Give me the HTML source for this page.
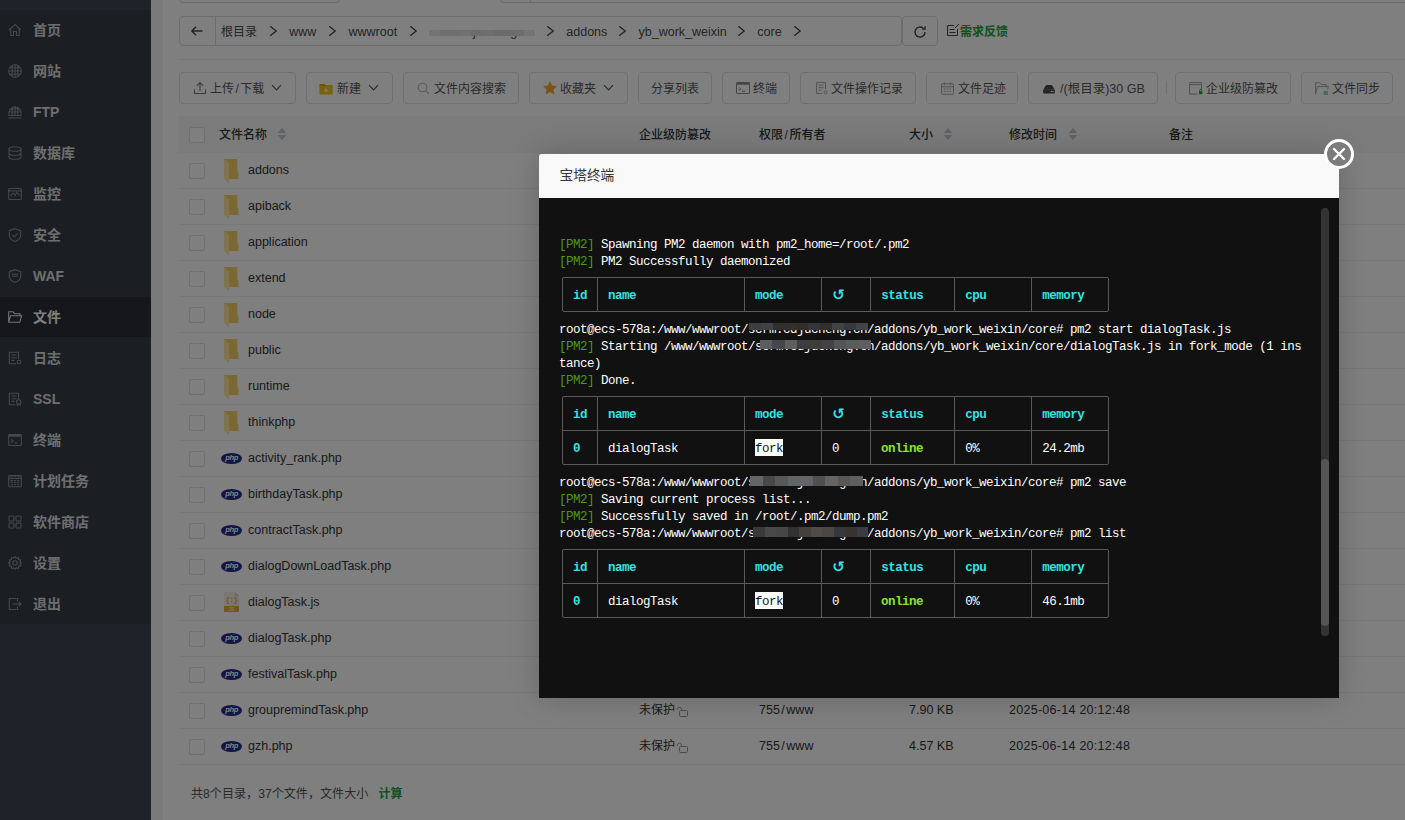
<!DOCTYPE html><html lang="zh-CN"><head><meta charset="utf-8"><title>宝塔Linux面板</title><style>
*{box-sizing:border-box;margin:0;padding:0}
html,body{width:1405px;height:820px;overflow:hidden;background:#f4f4f4;font-family:"Liberation Sans","Noto Sans CJK SC",sans-serif;font-size:12px;color:#333}
.abs{position:absolute}
#side{position:absolute;left:0;top:0;width:151px;height:820px;background:#3e4450}
#menu{position:absolute;left:0;top:10px;width:151px;height:614px;background:#363c46}
.mi{position:absolute;left:0;width:151px;height:40px;color:#dcdcdc;font-weight:bold;font-size:14px;line-height:40px}
.mi span{position:absolute;left:33px;top:0;white-space:nowrap}
.mi svg{position:absolute;left:7px;top:12px;width:16px;height:16px;stroke:#8c8f96;fill:none;stroke-width:1.1}
.mi.on{background:#2b2f37;color:#fff}
.mi.on svg{stroke:#e6e6e6}
#card{position:absolute;left:163px;top:-20px;width:1260px;height:860px;background:#fff}
.bx{position:absolute;border:1px solid #dcdfe6;border-radius:4px;background:#fff}
.btn{position:absolute;top:72px;height:32px;border:1px solid #dcdfe6;border-radius:4px;background:#fff;color:#555;font-size:12px;line-height:30px;white-space:nowrap}
.btn span{position:absolute;top:1px}
.btn svg{position:absolute}
.crumb{position:absolute;top:17px;height:30px;line-height:30px;font-size:12.5px;color:#4a4a4a;white-space:nowrap}
.hd{position:absolute;top:117px;height:36px;line-height:36px;font-size:12px;color:#333;font-weight:500;white-space:nowrap}
.row{position:absolute;left:179px;width:1226px;height:36px;border-bottom:1px solid #f0f1f4}
.cb{position:absolute;left:10px;top:10px;width:16px;height:16px;border:1px solid #dcdfe6;border-radius:2px;background:#fff}
.fn{position:absolute;left:69px;top:0;line-height:35px;font-size:12.5px;color:#333;white-space:nowrap}
.cell{position:absolute;top:0;line-height:35px;font-size:12.5px;color:#333;white-space:nowrap}
.ico{position:absolute}
#shade{position:absolute;left:0;top:0;width:1405px;height:820px;background:rgba(0,0,0,.5)}
#modal{position:absolute;left:539px;top:154px;width:800px;height:544px;background:#111;border-radius:2px;box-shadow:0 0 30px rgba(0,0,0,.2)}
#mtitle{position:absolute;left:0;top:0;width:800px;height:44px;background:#f9f9f9;border-radius:2px 2px 0 0;font-size:13.7px;color:#333;line-height:43px;padding-left:20.5px}
#close{position:absolute;left:785px;top:-15px;width:30px;height:30px;border-radius:50%;background:#7c7c7c;border:3px solid #fff}
#term{position:absolute;left:0;top:44px;width:800px;height:500px;background:#111;overflow:hidden}
.tl{position:absolute;left:20px;height:17px;line-height:17px;font-family:"Liberation Mono","DejaVu Sans Mono",monospace;font-size:12.5px;letter-spacing:-0.5px;color:#fff;white-space:pre}
.g{color:#4e9a06}
.c{color:#34e2e2;font-weight:bold}
.lg{color:#8ae234;font-weight:bold}
.inv{background:#fff;color:#111;padding-top:3.4px}
.rl{display:inline-block;width:7px;height:17px;vertical-align:top;font-family:"DejaVu Sans","DejaVu Sans Mono",sans-serif;font-size:15px;line-height:14px;letter-spacing:0}
.hl{position:absolute;height:1px;background:#5a5a5a}
.vl{position:absolute;width:1px;background:#5a5a5a}
</style></head><body>
<div id="side"><div id="menu">
<div class="mi" style="top:0px"><svg viewBox="0 0 16 16"><path d="M2 8 L8 2.5 L14 8 M3.8 6.8 V13.5 H6.5 V9.5 H9.5 V13.5 H12.2 V6.8"/></svg><span>首页</span></div>
<div class="mi" style="top:41px"><svg viewBox="0 0 16 16"><circle cx="8" cy="8" r="6.3"/><path d="M1.7 8H14.3M8 1.7V14.3M2.6 4.8H13.4M2.6 11.2H13.4M5.2 2.4V13.6M10.8 2.4V13.6"/></svg><span>网站</span></div>
<div class="mi" style="top:82px"><svg viewBox="0 0 16 16"><path d="M2 11.5A6.3 6.3 0 1 1 14 11.5Z M1.5 14H14.5 M1.8 8H14.2M8 1.7V11.5M5.2 2.5V11.5M10.8 2.5V11.5M2.6 5H13.4"/></svg><span>FTP</span></div>
<div class="mi" style="top:123px"><svg viewBox="0 0 16 16"><ellipse cx="8" cy="4" rx="6" ry="2.3"/><path d="M2 4V12C2 13.3 4.7 14.3 8 14.3S14 13.3 14 12V4M2 8C2 9.3 4.7 10.3 8 10.3S14 9.3 14 8"/></svg><span>数据库</span></div>
<div class="mi" style="top:164px"><svg viewBox="0 0 16 16"><rect x="1.7" y="2.5" width="12.6" height="11" rx="1"/><path d="M3.5 10 L6 7 L8 9.5 L10 6.5 L12.5 9.5 M1.7 5H14.3"/></svg><span>监控</span></div>
<div class="mi" style="top:205px"><svg viewBox="0 0 16 16"><path d="M8 1.7 L13.7 3.7 V8 C13.7 11.2 11.3 13.4 8 14.6 C4.7 13.4 2.3 11.2 2.3 8 V3.7 Z M5.5 8 L7.4 9.8 L10.7 6.4"/></svg><span>安全</span></div>
<div class="mi" style="top:246px"><svg viewBox="0 0 16 16"><path d="M8 1.7 L13.7 3.7 V8 C13.7 11.2 11.3 13.4 8 14.6 C4.7 13.4 2.3 11.2 2.3 8 V3.7 Z M5 6.3H11 M5.3 8.3H10.7"/></svg><span>WAF</span></div>
<div class="mi on" style="top:287px"><svg viewBox="0 0 16 16"><path d="M1.7 13.3 V2.7 H6 L7.6 4.7 H13 V6.7 M1.7 13.3 L3.6 6.7 H14.6 L12.8 13.3 Z"/></svg><span>文件</span></div>
<div class="mi" style="top:328px"><svg viewBox="0 0 16 16"><path d="M11.5 9V2.3H2.3V13.7H9 M4.3 5H9.7 M4.3 7.7H9.7 M4.3 10.4H7.5"/><circle cx="12" cy="12" r="1.8"/></svg><span>日志</span></div>
<div class="mi" style="top:369px"><svg viewBox="0 0 16 16"><path d="M11.5 8V2.3H2.3V13.7H8.5 M4.3 5H9.7 M4.3 7.7H9.7 M4.3 10.4H7.5"/><circle cx="11.7" cy="11" r="2.2"/><path d="M10.5 13 L10 15 M12.9 13 L13.4 15"/></svg><span>SSL</span></div>
<div class="mi" style="top:410px"><svg viewBox="0 0 16 16"><rect x="1.7" y="2.5" width="12.6" height="11" rx=".6"/><path d="M1.7 3.8H14.3" stroke-width="2"/><path d="M4 7.3 L6.2 9 L4 10.8 M7.5 11H10.5"/></svg><span>终端</span></div>
<div class="mi" style="top:451px"><svg viewBox="0 0 16 16"><rect x="1.7" y="2.6" width="12.6" height="11.2" rx=".8"/><path d="M1.7 5.4H14.3 M3.7 7.6H6 M6.9 7.6H9.1 M10 7.6H12.3 M3.7 9.7H6 M6.9 9.7H9.1 M10 9.7H12.3 M3.7 11.8H6 M6.9 11.8H9.1 M10 11.8H12.3 M4.5 2.6V4 M8 2.6V4 M11.5 2.6V4"/></svg><span>计划任务</span></div>
<div class="mi" style="top:492px"><svg viewBox="0 0 16 16"><rect x="2" y="2" width="5" height="5" rx="1"/><rect x="9" y="2" width="5" height="5" rx="1"/><rect x="2" y="9" width="5" height="5" rx="1"/><rect x="9" y="9" width="5" height="5" rx="1"/></svg><span>软件商店</span></div>
<div class="mi" style="top:533px"><svg viewBox="0 0 16 16"><circle cx="8" cy="8" r="2.2"/><path d="M8 1.6 L9.2 3.2 L11.2 2.5 L11.6 4.5 L13.6 4.9 L12.9 6.8 L14.4 8 L12.9 9.2 L13.6 11.1 L11.6 11.5 L11.2 13.5 L9.2 12.8 L8 14.4 L6.8 12.8 L4.8 13.5 L4.4 11.5 L2.4 11.1 L3.1 9.2 L1.6 8 L3.1 6.8 L2.4 4.9 L4.4 4.5 L4.8 2.5 L6.8 3.2 Z"/></svg><span>设置</span></div>
<div class="mi" style="top:574px"><svg viewBox="0 0 16 16"><path d="M10.5 5.5V2.5H2.3V13.5H10.5V10.5 M5.5 8H14 M11.8 5.8 L14 8 L11.8 10.2"/></svg><span>退出</span></div>
</div></div>
<div id="card"></div>
<div class="bx" style="left:179px;top:-30px;width:161px;height:33px;border-color:#cfd2d8"></div>
<div class="bx" style="left:500px;top:-30px;width:940px;height:33px;border-color:#cfd2d8"></div>
<div class="abs" style="left:530px;top:-1px;width:1px;height:4px;background:#cfd2d8"></div>
<div class="bx" style="left:179px;top:16px;width:723px;height:30px;border-color:#d8d9dc"></div>
<div class="bx" style="left:902px;top:16px;width:36px;height:30px;border-color:#d8d9dc"></div>
<div class="abs" style="left:215px;top:16px;width:1px;height:30px;background:#d8d9dc"></div>
<svg class="abs" style="left:190px;top:24px" width="14" height="14" viewBox="0 0 14 14" fill="none" stroke="#444" stroke-width="1.4"><path d="M12.5 7H2 M6 2.8 L1.8 7 L6 11.2"/></svg>
<svg class="abs" style="left:912px;top:23.6px" width="16" height="16" viewBox="0 0 16 16" fill="none" stroke="#444" stroke-width="1.4"><path d="M13 8 A5 5 0 1 1 11.2 4.2"/><path d="M13 2.2 V5 H10.2"/></svg>
<div class="crumb" style="left:221.0px;font-size:12px">根目录</div>
<div class="crumb" style="left:289.3px;font-size:12.5px">www</div>
<div class="crumb" style="left:348.5px;font-size:12.5px">wwwroot</div>
<div class="crumb" style="left:566.3px;font-size:12.5px">addons</div>
<div class="crumb" style="left:638.5px;font-size:12.5px">yb_work_weixin</div>
<div class="crumb" style="left:757.3px;font-size:12.5px">core</div>
<div class="crumb" style="left:429px;font-size:12.6px;clip-path:inset(13.5px 0 4px 0)">scrm.cdjucheng.cn</div>
<div class="abs" style="left:429px;top:30px;width:106px;height:5.6px;background:linear-gradient(90deg,#e9e9e9 0.0px,#e9e9e9 10.6px,#dedede 10.6px,#dedede 21.2px,#dedede 21.2px,#dedede 31.8px,#e2e2e2 31.8px,#e2e2e2 42.4px,#d8d8d8 42.4px,#d8d8d8 53.0px,#dcdcdc 53.0px,#dcdcdc 63.6px,#d6d6d6 63.6px,#d6d6d6 74.2px,#d6d6d6 74.2px,#d6d6d6 84.8px,#dadada 84.8px,#dadada 95.4px,#e8e8e8 95.4px,#e8e8e8 106.0px)"></div>
<svg class="abs" style="left:268.5px;top:25.4px" width="10" height="12" viewBox="0 0 10 12" fill="none" stroke="#4a4a4a" stroke-width="1.4"><path d="M1.2 1.2 L7.2 6 L1.2 10.8"/></svg>
<svg class="abs" style="left:327.8px;top:25.4px" width="10" height="12" viewBox="0 0 10 12" fill="none" stroke="#4a4a4a" stroke-width="1.4"><path d="M1.2 1.2 L7.2 6 L1.2 10.8"/></svg>
<svg class="abs" style="left:409.4px;top:25.4px" width="10" height="12" viewBox="0 0 10 12" fill="none" stroke="#4a4a4a" stroke-width="1.4"><path d="M1.2 1.2 L7.2 6 L1.2 10.8"/></svg>
<svg class="abs" style="left:545.8px;top:25.4px" width="10" height="12" viewBox="0 0 10 12" fill="none" stroke="#4a4a4a" stroke-width="1.4"><path d="M1.2 1.2 L7.2 6 L1.2 10.8"/></svg>
<svg class="abs" style="left:618.0px;top:25.4px" width="10" height="12" viewBox="0 0 10 12" fill="none" stroke="#4a4a4a" stroke-width="1.4"><path d="M1.2 1.2 L7.2 6 L1.2 10.8"/></svg>
<svg class="abs" style="left:736.5px;top:25.4px" width="10" height="12" viewBox="0 0 10 12" fill="none" stroke="#4a4a4a" stroke-width="1.4"><path d="M1.2 1.2 L7.2 6 L1.2 10.8"/></svg>
<svg class="abs" style="left:793.1px;top:25.4px" width="10" height="12" viewBox="0 0 10 12" fill="none" stroke="#4a4a4a" stroke-width="1.4"><path d="M1.2 1.2 L7.2 6 L1.2 10.8"/></svg>
<svg class="abs" style="left:946px;top:23px" width="14" height="14" viewBox="0 0 14 14" fill="none" stroke="#444" stroke-width="1"><path d="M11.5 6V12.5H1.5V2.5H8 M3.5 6.5H8.5 M3.5 9.5H9.5 M9 5 L13 1"/></svg>
<div class="crumb" style="left:960px;color:#20a53a;font-weight:bold;font-size:12px">需求反馈</div>
<div class="abs" style="left:179px;top:59px;width:1226px;height:1px;background:#ebeef5"></div>
<div class="btn" style="left:179px;width:117px"><svg style="left:13px;top:8px" width="14" height="14" viewBox="0 0 14 14" fill="none" stroke="#777" stroke-width="1.1"><path d="M1.5 8.5V12.5H12.5V8.5 M7 10V1.8 M3.8 4.8 L7 1.6 L10.2 4.8"/></svg><span style="left:30px">上传<i style="font-style:normal;padding:0 1.5px">/</i>下载</span><svg style="left:91px;top:11px" width="11" height="8" viewBox="0 0 11 8" fill="none" stroke="#555" stroke-width="1.1"><path d="M1 1.2 L5.5 6 L10 1.2"/></svg></div>
<div class="btn" style="left:306px;width:87px"><svg style="left:12px;top:10px" width="14" height="11.5" viewBox="0 0 15 13"><path d="M0 1.2H6L7 2.5H15V4H0Z" fill="#e6a700"/><rect x="0" y="3.4" width="15" height="9.6" fill="#f5c518"/><path d="M5 8.2H10M7.5 5.8V10.6" stroke="#fff" stroke-width="1.2"/></svg><span style="left:30px">新建</span><svg style="left:61px;top:11px" width="11" height="8" viewBox="0 0 11 8" fill="none" stroke="#555" stroke-width="1.1"><path d="M1 1.2 L5.5 6 L10 1.2"/></svg></div>
<div class="btn" style="left:403px;width:116px"><svg style="left:13px;top:9px" width="13" height="13" viewBox="0 0 13 13" fill="none" stroke="#b4b8c0" stroke-width="1.1"><circle cx="5.5" cy="5.5" r="4.3"/><path d="M8.8 8.8 L12 12"/></svg><span style="left:30px">文件内容搜索</span></div>
<div class="btn" style="left:529px;width:99px"><svg style="left:13px;top:8px" width="14" height="14" viewBox="0 0 14 14"><path d="M7 0.8 L8.9 4.9 L13.4 5.4 L10 8.4 L11 12.9 L7 10.6 L3 12.9 L4 8.4 L0.6 5.4 L5.1 4.9 Z" fill="#f5a623" stroke="#e89a18" stroke-width=".6" stroke-linejoin="round"/></svg><span style="left:30px">收藏夹</span><svg style="left:73px;top:11px" width="11" height="8" viewBox="0 0 11 8" fill="none" stroke="#555" stroke-width="1.1"><path d="M1 1.2 L5.5 6 L10 1.2"/></svg></div>
<div class="btn" style="left:638px;width:74px"><span style="left:12px">分享列表</span></div>
<div class="btn" style="left:722px;width:68px"><svg style="left:13px;top:9px" width="14" height="12" viewBox="0 0 14 12" fill="none" stroke="#8a8a8a" stroke-width="1"><rect x=".5" y=".5" width="13" height="11" rx=".6"/><path d="M.5 1.6H13.5" stroke-width="2.2"/><path d="M2.8 5.4 L4.8 7 L2.8 8.6 M6 9.2H9"/></svg><span style="left:30px">终端</span></div>
<div class="btn" style="left:800px;width:116px"><svg style="left:15px;top:9px" width="12" height="13" viewBox="0 0 12 13" fill="none" stroke="#a8a8a8" stroke-width="1"><path d="M9.5 7V.6H.6V11.5H6.5 M2.5 3.2H7.5 M2.5 5.7H7.5 M2.5 8.2H5.5"/><circle cx="9.6" cy="10.3" r="1.5"/></svg><span style="left:30px">文件操作记录</span></div>
<div class="btn" style="left:926px;width:92px"><svg style="left:14px;top:9px" width="13" height="13" viewBox="0 0 13 13" fill="none" stroke="#a0a0a0" stroke-width="1"><rect x=".6" y="1.8" width="11.8" height="10.6" rx="1"/><path d="M.6 4.8H12.4 M3.5 .5V3 M9.5 .5V3 M2.8 7H4.6M5.6 7H7.4M8.4 7H10.2M2.8 9.5H4.6M5.6 9.5H7.4M8.4 9.5H10.2"/></svg><span style="left:31px">文件足迹</span></div>
<div class="btn" style="left:1028px;width:130px"><svg style="left:14px;top:12px" width="12" height="9" viewBox="0 0 12 9"><path d="M2.6 .8 Q3 .1 3.8 .1H8.2Q9 .1 9.4 .8L11.6 4.6H.4Z" fill="#4a4a4a"/><rect x=".2" y="4.2" width="11.6" height="4.4" rx="1.2" fill="#4a4a4a"/><circle cx="8.4" cy="6.5" r=".7" fill="#fff"/><circle cx="10" cy="6.5" r=".7" fill="#fff"/></svg><span style="left:31px;font-size:12.5px">/(根目录)30 GB</span></div>
<div class="abs" style="left:1166px;top:81px;width:1px;height:13px;background:#dcdfe6"></div>
<div class="btn" style="left:1175px;width:116px"><svg style="left:13px;top:9px" width="14" height="13" viewBox="0 0 14 13" fill="none" stroke="#a0a0a0" stroke-width="1"><path d="M8.5 12H.6V.6H12.4V7 M.6 2.6H12.4"/><rect x="10" y="9.2" width="3.4" height="3" fill="#20a53a" stroke="none"/><path d="M10.7 9.2V8.3A1 1 0 0 1 12.7 8.3V9.2" stroke="#20a53a"/></svg><span style="left:30px">企业级防篡改</span></div>
<div class="btn" style="left:1301px;width:92px"><svg style="left:13px;top:9px" width="14" height="13" viewBox="0 0 14 13" fill="none" stroke="#a8a8a8" stroke-width="1"><path d="M.6 12V.8H4.8L6.2 2.6H11.4V4.6 M.6 12 L2.4 4.6H13.4L12.6 7.5"/><path d="M8.5 10H13M8.5 12H13" stroke="#3aa852" stroke-width="1"/></svg><span style="left:30px">文件同步</span></div>
<div class="abs" style="left:179px;top:116px;width:1226px;height:37px;background:#f6f7f9"></div>
<div class="cb" style="left:189px;top:127px"></div>
<div class="hd" style="left:219px">文件名称</div>
<div class="hd" style="left:639px">企业级防篡改</div>
<div class="hd" style="left:759px">权限<i style="font-style:normal;padding:0 1.6px">/</i>所有者</div>
<div class="hd" style="left:909px">大小</div>
<div class="hd" style="left:1009px">修改时间</div>
<div class="hd" style="left:1169px">备注</div>
<svg class="abs" style="left:277px;top:127px" width="10" height="14" viewBox="0 0 10 14"><path d="M5 .8 L9.2 6 H.8Z M5 13.2 L9.2 8 H.8Z" fill="#c0c4cc"/></svg>
<svg class="abs" style="left:943px;top:127px" width="10" height="14" viewBox="0 0 10 14"><path d="M5 .8 L9.2 6 H.8Z M5 13.2 L9.2 8 H.8Z" fill="#c0c4cc"/></svg>
<svg class="abs" style="left:1068px;top:127px" width="10" height="14" viewBox="0 0 10 14"><path d="M5 .8 L9.2 6 H.8Z M5 13.2 L9.2 8 H.8Z" fill="#c0c4cc"/></svg>
<div class="row" style="top:153px"><div class="cb"></div><svg class="ico" style="left:44px;top:6px" width="17" height="25" viewBox="0 0 17 25"><path d="M1 0H14.3V12.4H15.4V20H6V24Z" fill="#f9d066"/><path d="M1 0 L6 4.2 V24 L1 20Z" fill="#ffe8a0"/></svg><div class="fn">addons</div></div>
<div class="row" style="top:189px"><div class="cb"></div><svg class="ico" style="left:44px;top:6px" width="17" height="25" viewBox="0 0 17 25"><path d="M1 0H14.3V12.4H15.4V20H6V24Z" fill="#f9d066"/><path d="M1 0 L6 4.2 V24 L1 20Z" fill="#ffe8a0"/></svg><div class="fn">apiback</div></div>
<div class="row" style="top:225px"><div class="cb"></div><svg class="ico" style="left:44px;top:6px" width="17" height="25" viewBox="0 0 17 25"><path d="M1 0H14.3V12.4H15.4V20H6V24Z" fill="#f9d066"/><path d="M1 0 L6 4.2 V24 L1 20Z" fill="#ffe8a0"/></svg><div class="fn">application</div></div>
<div class="row" style="top:261px"><div class="cb"></div><svg class="ico" style="left:44px;top:6px" width="17" height="25" viewBox="0 0 17 25"><path d="M1 0H14.3V12.4H15.4V20H6V24Z" fill="#f9d066"/><path d="M1 0 L6 4.2 V24 L1 20Z" fill="#ffe8a0"/></svg><div class="fn">extend</div></div>
<div class="row" style="top:297px"><div class="cb"></div><svg class="ico" style="left:44px;top:6px" width="17" height="25" viewBox="0 0 17 25"><path d="M1 0H14.3V12.4H15.4V20H6V24Z" fill="#f9d066"/><path d="M1 0 L6 4.2 V24 L1 20Z" fill="#ffe8a0"/></svg><div class="fn">node</div></div>
<div class="row" style="top:333px"><div class="cb"></div><svg class="ico" style="left:44px;top:6px" width="17" height="25" viewBox="0 0 17 25"><path d="M1 0H14.3V12.4H15.4V20H6V24Z" fill="#f9d066"/><path d="M1 0 L6 4.2 V24 L1 20Z" fill="#ffe8a0"/></svg><div class="fn">public</div></div>
<div class="row" style="top:369px"><div class="cb"></div><svg class="ico" style="left:44px;top:6px" width="17" height="25" viewBox="0 0 17 25"><path d="M1 0H14.3V12.4H15.4V20H6V24Z" fill="#f9d066"/><path d="M1 0 L6 4.2 V24 L1 20Z" fill="#ffe8a0"/></svg><div class="fn">runtime</div></div>
<div class="row" style="top:405px"><div class="cb"></div><svg class="ico" style="left:44px;top:6px" width="17" height="25" viewBox="0 0 17 25"><path d="M1 0H14.3V12.4H15.4V20H6V24Z" fill="#f9d066"/><path d="M1 0 L6 4.2 V24 L1 20Z" fill="#ffe8a0"/></svg><div class="fn">thinkphp</div></div>
<div class="row" style="top:441px"><div class="cb"></div><div class="ico" style="left:42.3px;top:12px;width:20.6px;height:11px;border-radius:50%;background:#272b88;color:#fff;font:italic bold 7.5px/10.5px 'Liberation Sans',sans-serif;text-align:center;letter-spacing:-.3px">php</div><div class="fn">activity_rank.php</div></div>
<div class="row" style="top:477px"><div class="cb"></div><div class="ico" style="left:42.3px;top:12px;width:20.6px;height:11px;border-radius:50%;background:#272b88;color:#fff;font:italic bold 7.5px/10.5px 'Liberation Sans',sans-serif;text-align:center;letter-spacing:-.3px">php</div><div class="fn">birthdayTask.php</div></div>
<div class="row" style="top:513px"><div class="cb"></div><div class="ico" style="left:42.3px;top:12px;width:20.6px;height:11px;border-radius:50%;background:#272b88;color:#fff;font:italic bold 7.5px/10.5px 'Liberation Sans',sans-serif;text-align:center;letter-spacing:-.3px">php</div><div class="fn">contractTask.php</div></div>
<div class="row" style="top:549px"><div class="cb"></div><div class="ico" style="left:42.3px;top:12px;width:20.6px;height:11px;border-radius:50%;background:#272b88;color:#fff;font:italic bold 7.5px/10.5px 'Liberation Sans',sans-serif;text-align:center;letter-spacing:-.3px">php</div><div class="fn">dialogDownLoadTask.php</div></div>
<div class="row" style="top:585px"><div class="cb"></div><svg class="ico" style="left:45px;top:7.4px" width="15" height="20" viewBox="0 0 15 20"><path d="M0 0H11L15 4V14H0Z" fill="#f3efe4"/><path d="M11 0 L15 4 H11Z" fill="#d8d3c4"/><rect x="0" y="14" width="15" height="6" fill="#f0a92e"/><text x="7.5" y="9.6" font-family="Liberation Mono,monospace" font-size="7.5" font-weight="bold" fill="#f0a92e" text-anchor="middle" letter-spacing="-.6">{:}</text><text x="7.5" y="18.9" font-family="Liberation Sans,sans-serif" font-size="5" fill="#fff" text-anchor="middle">JS</text></svg><div class="fn">dialogTask.js</div></div>
<div class="row" style="top:621px"><div class="cb"></div><div class="ico" style="left:42.3px;top:12px;width:20.6px;height:11px;border-radius:50%;background:#272b88;color:#fff;font:italic bold 7.5px/10.5px 'Liberation Sans',sans-serif;text-align:center;letter-spacing:-.3px">php</div><div class="fn">dialogTask.php</div></div>
<div class="row" style="top:657px"><div class="cb"></div><div class="ico" style="left:42.3px;top:12px;width:20.6px;height:11px;border-radius:50%;background:#272b88;color:#fff;font:italic bold 7.5px/10.5px 'Liberation Sans',sans-serif;text-align:center;letter-spacing:-.3px">php</div><div class="fn">festivalTask.php</div></div>
<div class="row" style="top:693px"><div class="cb"></div><div class="ico" style="left:42.3px;top:12px;width:20.6px;height:11px;border-radius:50%;background:#272b88;color:#fff;font:italic bold 7.5px/10.5px 'Liberation Sans',sans-serif;text-align:center;letter-spacing:-.3px">php</div><div class="fn">groupremindTask.php</div><div class="cell" style="left:460px;font-size:12px">未保护<svg style="position:absolute;left:37px;top:13px" width="12" height="11" viewBox="0 0 12 11" fill="none" stroke="#999" stroke-width="1"><rect x="3.5" y="4.5" width="8" height="6" rx="1"/><path d="M5.5 4.5V3A2.2 2.2 0 0 0 1.2 3V4"/></svg></div><div class="cell" style="left:580px">755<i style="font-style:normal;padding:0 1.5px">/</i>www</div><div class="cell" style="left:730px">7.90 KB</div><div class="cell" style="left:830px;letter-spacing:.27px">2025-06-14 20:12:48</div></div>
<div class="row" style="top:729px"><div class="cb"></div><div class="ico" style="left:42.3px;top:12px;width:20.6px;height:11px;border-radius:50%;background:#272b88;color:#fff;font:italic bold 7.5px/10.5px 'Liberation Sans',sans-serif;text-align:center;letter-spacing:-.3px">php</div><div class="fn">gzh.php</div><div class="cell" style="left:460px;font-size:12px">未保护<svg style="position:absolute;left:37px;top:13px" width="12" height="11" viewBox="0 0 12 11" fill="none" stroke="#999" stroke-width="1"><rect x="3.5" y="4.5" width="8" height="6" rx="1"/><path d="M5.5 4.5V3A2.2 2.2 0 0 0 1.2 3V4"/></svg></div><div class="cell" style="left:580px">755<i style="font-style:normal;padding:0 1.5px">/</i>www</div><div class="cell" style="left:730px">4.57 KB</div><div class="cell" style="left:830px;letter-spacing:.27px">2025-06-14 20:12:48</div></div>
<div class="abs" style="left:191px;top:784px;line-height:20px;font-size:12.1px;color:#555;white-space:nowrap">共8个目录，37个文件，文件大小<span style="color:#20a53a;font-weight:bold;margin-left:10px;font-size:12px">计算</span></div>
<div id="shade"></div>
<div id="modal"><div id="mtitle">宝塔终端</div>
<div id="close"><svg style="position:absolute;left:5px;top:5px" width="14" height="14" viewBox="0 0 14 14" stroke="#fff" stroke-width="2.3" stroke-linecap="round"><path d="M2 2 L12 12 M12 2 L2 12"/></svg></div>
<div id="term">
<div class="tl" style="top:39.0px"><span class="g">[PM2]</span> Spawning PM2 daemon with pm2_home=/root/.pm2</div>
<div class="tl" style="top:56.0px"><span class="g">[PM2]</span> PM2 Successfully daemonized</div>
<div class="tl" style="top:90.0px"> <span class="c"> id </span> <span class="c"> name               </span> <span class="c"> mode     </span> <span class="c"> <b class="rl">↺</b>    </span> <span class="c"> status    </span> <span class="c"> cpu      </span> <span class="c"> memory   </span> </div>
<div class="tl" style="top:124.0px">root@ecs-578a:/www/wwwroot/scrm.cdjucheng.cn/addons/yb_work_weixin/core# pm2 start dialogTask.js</div>
<div class="tl" style="top:141.0px"><span class="g">[PM2]</span> Starting /www/wwwroot/scrm.cdjucheng.cn/addons/yb_work_weixin/core/dialogTask.js in fork_mode (1 ins</div>
<div class="tl" style="top:158.0px">tance)</div>
<div class="tl" style="top:175.0px"><span class="g">[PM2]</span> Done.</div>
<div class="tl" style="top:209.0px"> <span class="c"> id </span> <span class="c"> name               </span> <span class="c"> mode     </span> <span class="c"> <b class="rl">↺</b>    </span> <span class="c"> status    </span> <span class="c"> cpu      </span> <span class="c"> memory   </span> </div>
<div class="tl" style="top:243.0px"> <span class="c"> 0  </span>  dialogTask           <span class="inv">fork</span>       0     <span class="lg"> online    </span>  0%         24.2mb    </div>
<div class="tl" style="top:277.0px">root@ecs-578a:/www/wwwroot/scrm.cdjucheng.cn/addons/yb_work_weixin/core# pm2 save</div>
<div class="tl" style="top:294.0px"><span class="g">[PM2]</span> Saving current process list...</div>
<div class="tl" style="top:311.0px"><span class="g">[PM2]</span> Successfully saved in /root/.pm2/dump.pm2</div>
<div class="tl" style="top:328.0px">root@ecs-578a:/www/wwwroot/scrm.cdjucheng.cn/addons/yb_work_weixin/core# pm2 list</div>
<div class="tl" style="top:362.0px"> <span class="c"> id </span> <span class="c"> name               </span> <span class="c"> mode     </span> <span class="c"> <b class="rl">↺</b>    </span> <span class="c"> status    </span> <span class="c"> cpu      </span> <span class="c"> memory   </span> </div>
<div class="tl" style="top:396.0px"> <span class="c"> 0  </span>  dialogTask           <span class="inv">fork</span>       0     <span class="lg"> online    </span>  0%         46.1mb    </div>
<div class="abs" style="left:23px;top:79px;width:547px;height:35px;border:1px solid #5a5a5a;border-radius:2px"></div>
<div class="vl" style="left:58px;top:79px;height:35px"></div>
<div class="vl" style="left:205px;top:79px;height:35px"></div>
<div class="vl" style="left:282px;top:79px;height:35px"></div>
<div class="vl" style="left:331px;top:79px;height:35px"></div>
<div class="vl" style="left:415px;top:79px;height:35px"></div>
<div class="vl" style="left:492px;top:79px;height:35px"></div>
<div class="abs" style="left:23px;top:198px;width:547px;height:69px;border:1px solid #5a5a5a;border-radius:2px"></div>
<div class="hl" style="left:23px;top:232px;width:547px"></div>
<div class="vl" style="left:58px;top:198px;height:69px"></div>
<div class="vl" style="left:205px;top:198px;height:69px"></div>
<div class="vl" style="left:282px;top:198px;height:69px"></div>
<div class="vl" style="left:331px;top:198px;height:69px"></div>
<div class="vl" style="left:415px;top:198px;height:69px"></div>
<div class="vl" style="left:492px;top:198px;height:69px"></div>
<div class="abs" style="left:23px;top:351px;width:547px;height:69px;border:1px solid #5a5a5a;border-radius:2px"></div>
<div class="hl" style="left:23px;top:385px;width:547px"></div>
<div class="vl" style="left:58px;top:351px;height:69px"></div>
<div class="vl" style="left:205px;top:351px;height:69px"></div>
<div class="vl" style="left:282px;top:351px;height:69px"></div>
<div class="vl" style="left:331px;top:351px;height:69px"></div>
<div class="vl" style="left:415px;top:351px;height:69px"></div>
<div class="vl" style="left:492px;top:351px;height:69px"></div>
<div class="abs" style="left:210.0px;top:125.4px;width:118.5px;height:6.2px;background:linear-gradient(90deg,#3c3e40 0.0px,#3c3e40 11.8px,#3f4347 11.8px,#3f4347 23.7px,#322e2a 23.7px,#322e2a 35.5px,#31302f 35.5px,#31302f 47.4px,#312d29 47.4px,#312d29 59.2px,#33373b 59.2px,#33373b 71.1px,#312f2d 71.1px,#312f2d 83.0px,#414447 83.0px,#414447 94.8px,#36393c 94.8px,#36393c 106.6px,#414549 106.6px,#414549 118.5px)"></div>
<div class="abs" style="left:221.0px;top:141.8px;width:111.0px;height:9.4px;background:linear-gradient(90deg,#5b5e61 0.0px,#5b5e61 12.3px,#44484c 12.3px,#44484c 24.7px,#605e5c 24.7px,#605e5c 37.0px,#3c3d3e 37.0px,#3c3d3e 49.3px,#403c38 49.3px,#403c38 61.7px,#424242 61.7px,#424242 74.0px,#525456 74.0px,#525456 86.3px,#595c5f 86.3px,#595c5f 98.7px,#5e5e5e 98.7px,#5e5e5e 111.0px)"></div>
<div class="abs" style="left:211.0px;top:277.8px;width:113.0px;height:10.2px;background:linear-gradient(90deg,#636567 0.0px,#636567 12.6px,#474849 12.6px,#474849 25.1px,#56595c 25.1px,#56595c 37.7px,#626568 37.7px,#626568 50.2px,#62666a 50.2px,#62666a 62.8px,#524f4c 62.8px,#524f4c 75.3px,#666462 75.3px,#666462 87.9px,#595653 87.9px,#595653 100.4px,#605f5e 100.4px,#605f5e 113.0px)"></div>
<div class="abs" style="left:213.5px;top:329.0px;width:115.5px;height:9.8px;background:linear-gradient(90deg,#38393a 0.0px,#38393a 11.6px,#47494b 11.6px,#47494b 23.1px,#454647 23.1px,#454647 34.7px,#323232 34.7px,#323232 46.2px,#43403d 46.2px,#43403d 57.8px,#4d4c4b 57.8px,#4d4c4b 69.3px,#4a4744 69.3px,#4a4744 80.9px,#36393c 80.9px,#36393c 92.4px,#37332f 92.4px,#37332f 104.0px,#3b3d3f 104.0px,#3b3d3f 115.5px)"></div>
<div class="abs" style="left:782px;top:10px;width:8px;height:428px;background:#333;border-radius:4px"></div>
<div class="abs" style="left:782px;top:261px;width:8px;height:167px;background:#555;border-radius:4px"></div>
</div></div>
</body></html>
